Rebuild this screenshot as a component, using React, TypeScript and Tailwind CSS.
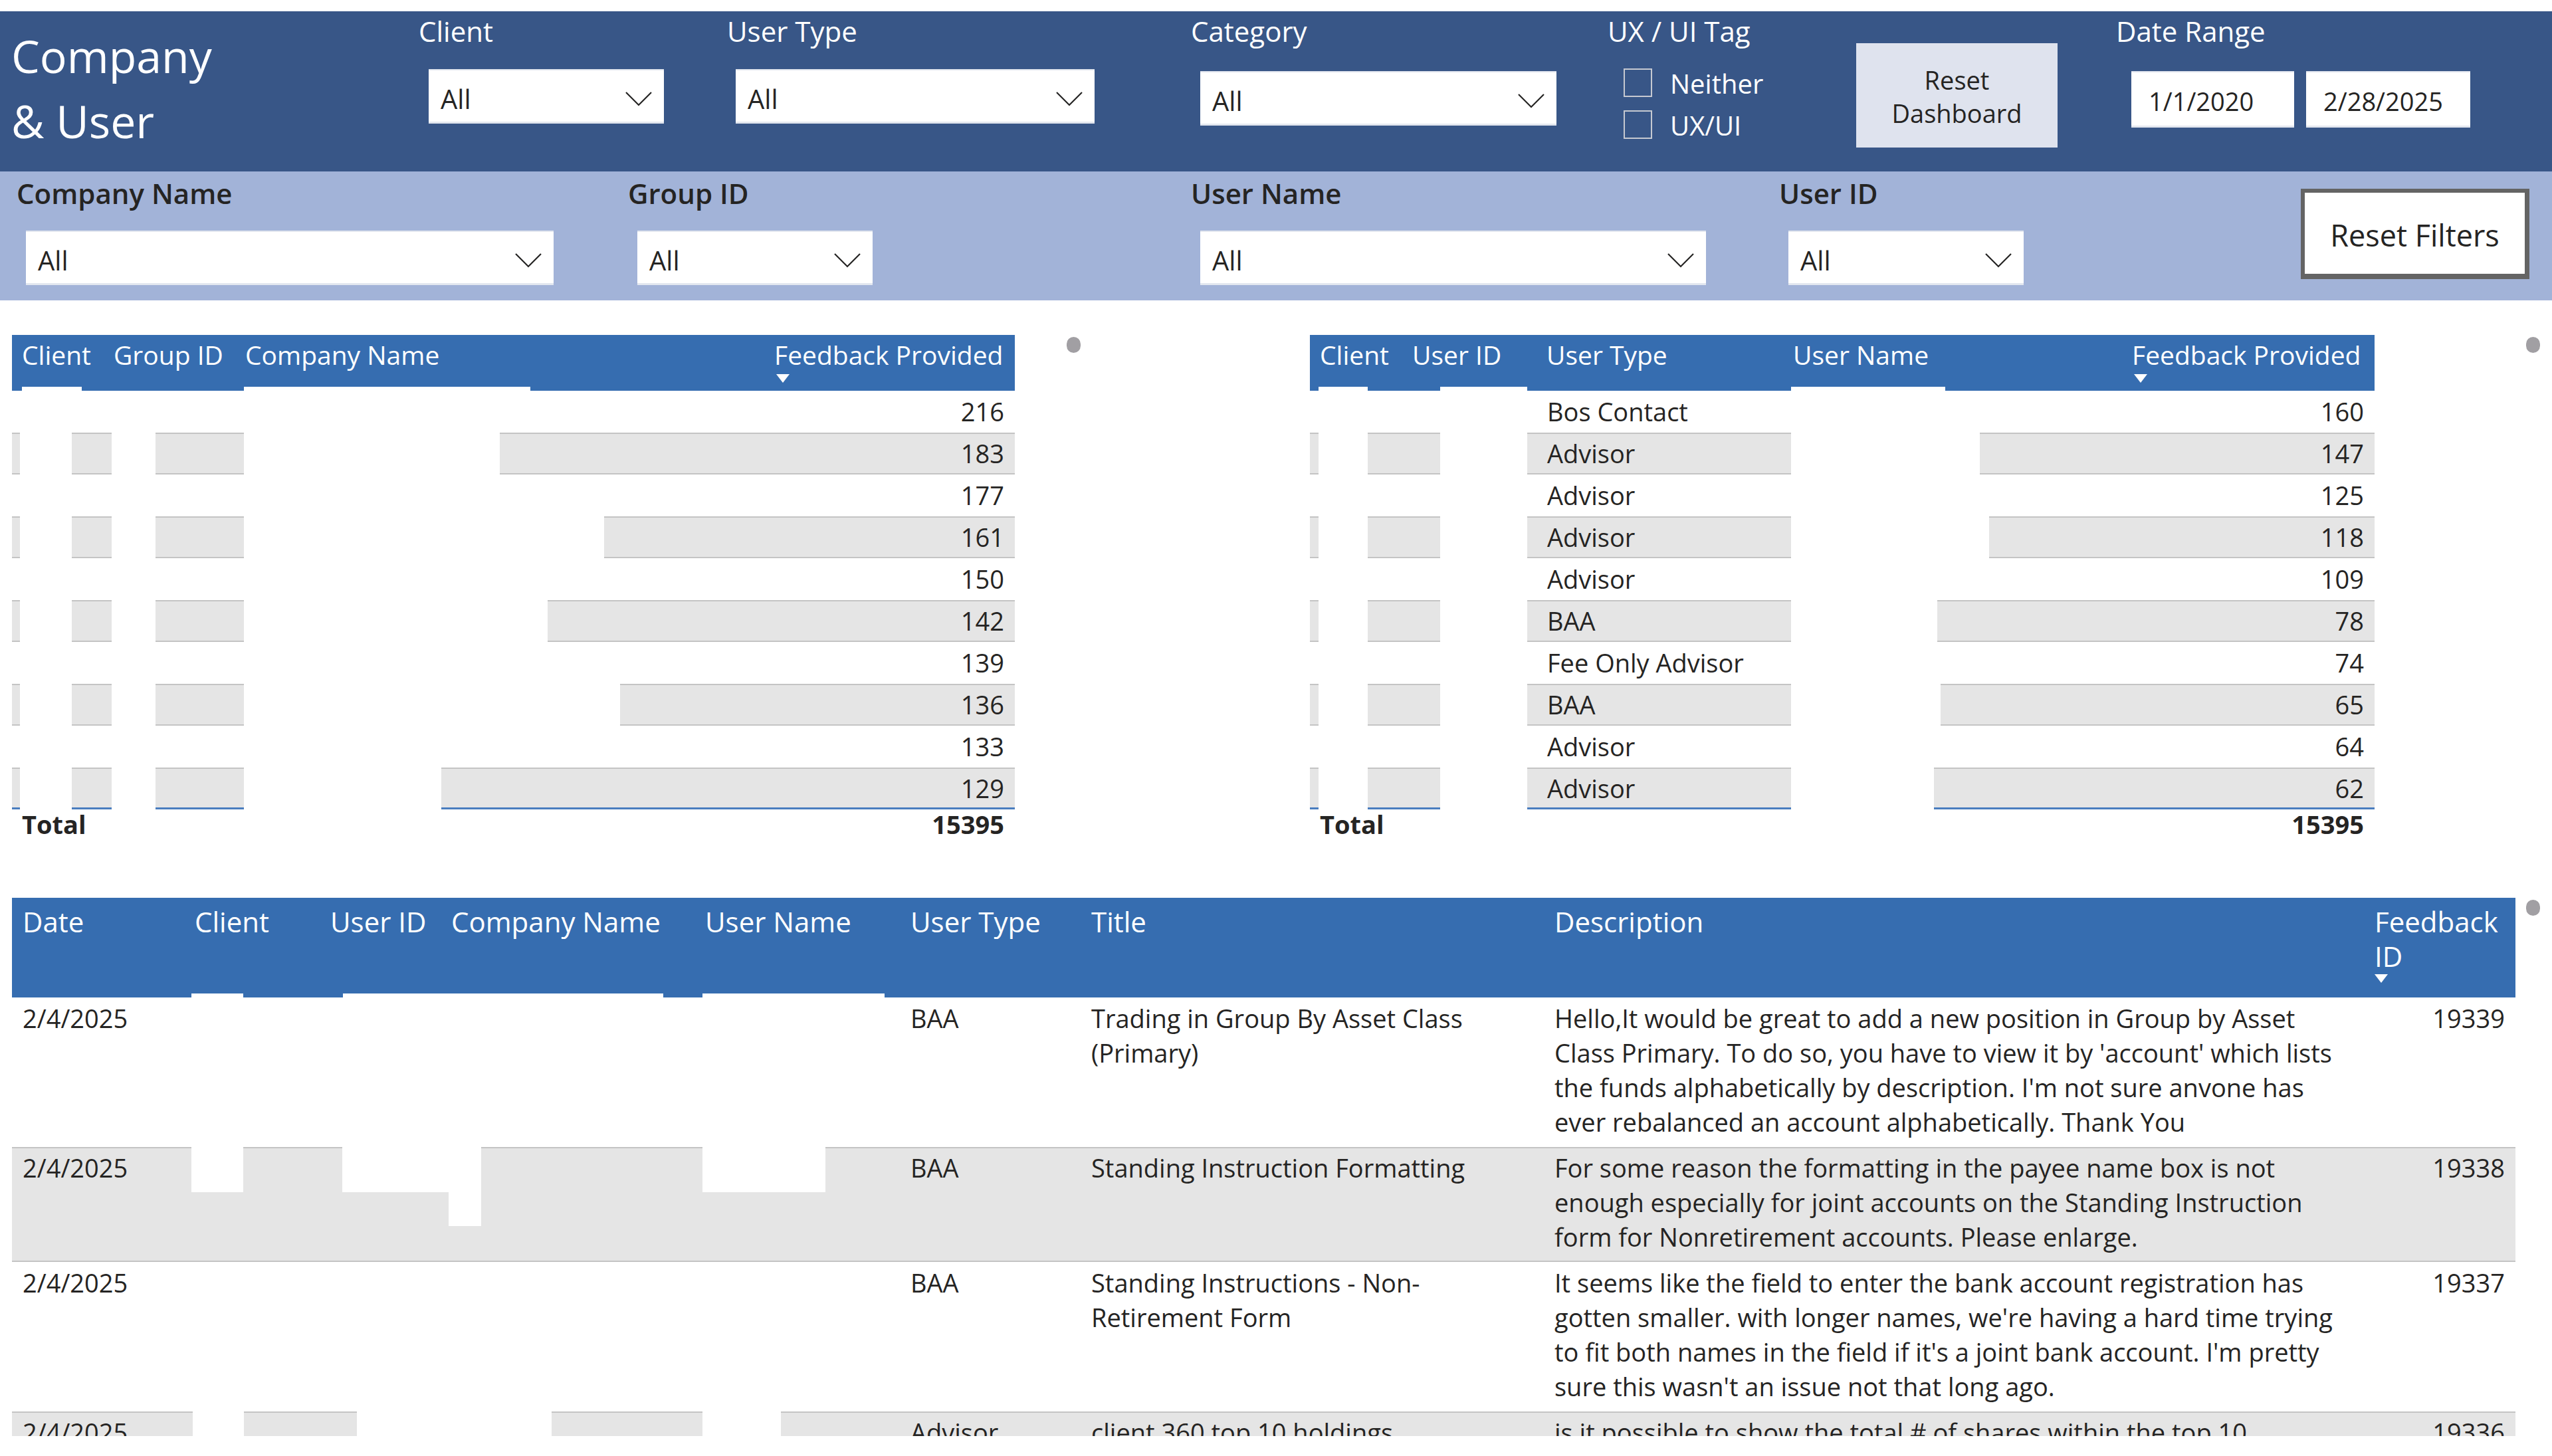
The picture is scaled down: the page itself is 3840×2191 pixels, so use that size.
import React from "react";

function Chevron() {
  return (
    <svg width="40" height="22" viewBox="0 0 40 22" fill="none">
      <path d="M1 1 L20 20 L39 1" stroke="#252423" strokeWidth="2.2" />
    </svg>
  );
}

function SortArrow() {
  return (
    <svg width="20" height="13" viewBox="0 0 20 13">
      <path d="M0 0 H20 L10 13 Z" fill="#ffffff" />
    </svg>
  );
}

function Dropdown({ cls }: { cls: string }) {
  return (
    <div
      className={`${cls} shrink-0 bg-white border-t-2 border-b-[3px] border-[#e3e7ef] flex items-center justify-between pl-[18px] pr-[18px] pt-[9px] text-[40px] text-[#252423]`}
    >
      <span>All</span>
      <Chevron />
    </div>
  );
}

function DateBox({ cls, value }: { cls: string; value: string }) {
  return (
    <div
      className={`${cls} h-[85px] shrink-0 bg-white border-t-2 border-b-[3px] border-[#e3e7ef] flex items-center pl-[26px] pt-[7px] text-[38px] text-[#252423]`}
    >
      {value}
    </div>
  );
}

function Checkbox({ label }: { label: string }) {
  return (
    <div className="flex items-center h-[43px]">
      <div className="w-[43px] h-[43px] border-2 border-[#c6c9d1] shrink-0" />
      <span className="ml-[27px] text-[40px] text-white translate-y-[1px]">{label}</span>
    </div>
  );
}

type Col = { w: string; label: string; right?: boolean; sort?: boolean };

type SmallRow = { cells: string[]; blocks: string[] };

function SmallTable({
  cols,
  rows,
  headerBlocks,
  total,
}: {
  cols: Col[];
  rows: SmallRow[];
  headerBlocks: string[];
  total: string;
}) {
  return (
    <div className="shrink-0 text-[#252423]">
      <div className="relative h-[84px] bg-[#366db0] flex text-white text-[39px] leading-[49px]">
        {cols.map((c, i) => (
          <div key={i} className={`${c.w} shrink-0 pl-[15px] pt-[5px] whitespace-nowrap`}>
            <div>{c.label}</div>
            {c.sort && (
              <div className="ml-[3px] mt-[5px] leading-none">
                <SortArrow />
              </div>
            )}
          </div>
        ))}
        {headerBlocks.map((b, i) => (
          <div key={i} className={`absolute bottom-0 h-[6px] bg-white ${b}`} />
        ))}
      </div>
      {rows.map((r, ri) => {
        const gray = ri % 2 === 1;
        const last = ri === rows.length - 1;
        const bg = gray
          ? last
            ? "bg-[#e5e5e5] shadow-[inset_0_2px_0_#c4c4c4,inset_0_-3px_0_#4a7dbf]"
            : "bg-[#e5e5e5] shadow-[inset_0_2px_0_#c4c4c4,inset_0_-2px_0_#c4c4c4]"
          : "bg-white";
        return (
          <div key={ri} className={`relative h-[63px] flex text-[38px] leading-[63px] ${bg}`}>
            {cols.map((c, ci) => (
              <div
                key={ci}
                className={`${c.w} shrink-0 whitespace-nowrap ${c.right ? "text-right pr-[16px]" : "pl-[16px]"}`}
              >
                {r.cells[ci]}
              </div>
            ))}
            {r.blocks.map((b, i) => (
              <div key={i} className={`absolute top-0 bottom-0 bg-white ${b}`} />
            ))}
          </div>
        );
      })}
      <div className="h-[44px] flex text-[38px] font-bold leading-[44px]">
        {cols.map((c, ci) => (
          <div
            key={ci}
            className={`${c.w} shrink-0 whitespace-nowrap ${c.right ? "text-right pr-[16px]" : "pl-[15px]"}`}
          >
            {ci === 0 ? "Total" : c.right ? total : ""}
          </div>
        ))}
      </div>
    </div>
  );
}

const t1Cols: Col[] = [
  { w: "w-[138px]", label: "Client" },
  { w: "w-[198px]", label: "Group ID" },
  { w: "w-[796px]", label: "Company Name" },
  { w: "w-[377px]", label: "Feedback Provided", right: true, sort: true },
];

const t1Common = ["left-[12px] w-[78px]", "left-[150px] w-[66px]"];
const t1Rows: SmallRow[] = [
  { cells: ["", "", "", "216"], blocks: [] },
  { cells: ["", "", "", "183"], blocks: [...t1Common, "left-[349px] w-[385px]"] },
  { cells: ["", "", "", "177"], blocks: [] },
  { cells: ["", "", "", "161"], blocks: [...t1Common, "left-[349px] w-[542px]"] },
  { cells: ["", "", "", "150"], blocks: [] },
  { cells: ["", "", "", "142"], blocks: [...t1Common, "left-[349px] w-[457px]"] },
  { cells: ["", "", "", "139"], blocks: [] },
  { cells: ["", "", "", "136"], blocks: [...t1Common, "left-[349px] w-[566px]"] },
  { cells: ["", "", "", "133"], blocks: [] },
  { cells: ["", "", "", "129"], blocks: [...t1Common, "left-[349px] w-[297px]"] },
];

const t2Cols: Col[] = [
  { w: "w-[139px]", label: "Client" },
  { w: "w-[202px]", label: "User ID" },
  { w: "w-[371px]", label: "User Type" },
  { w: "w-[510px]", label: "User Name" },
  { w: "w-[380px]", label: "Feedback Provided", right: true, sort: true },
];

const t2Common = ["left-[13px] w-[74px]", "left-[196px] w-[131px]"];
const t2Rows: SmallRow[] = [
  { cells: ["", "", "Bos Contact", "", "160"], blocks: [] },
  { cells: ["", "", "Advisor", "", "147"], blocks: [...t2Common, "left-[724px] w-[284px]"] },
  { cells: ["", "", "Advisor", "", "125"], blocks: [] },
  { cells: ["", "", "Advisor", "", "118"], blocks: [...t2Common, "left-[724px] w-[298px]"] },
  { cells: ["", "", "Advisor", "", "109"], blocks: [] },
  { cells: ["", "", "BAA", "", "78"], blocks: [...t2Common, "left-[724px] w-[220px]"] },
  { cells: ["", "", "Fee Only Advisor", "", "74"], blocks: [] },
  { cells: ["", "", "BAA", "", "65"], blocks: [...t2Common, "left-[724px] w-[225px]"] },
  { cells: ["", "", "Advisor", "", "64"], blocks: [] },
  { cells: ["", "", "Advisor", "", "62"], blocks: [...t2Common, "left-[724px] w-[215px]"] },
];

const bigCols: Col[] = [
  { w: "w-[259px]", label: "Date" },
  { w: "w-[204px]", label: "Client" },
  { w: "w-[182px]", label: "User ID" },
  { w: "w-[382px]", label: "Company Name" },
  { w: "w-[309px]", label: "User Name" },
  { w: "w-[272px]", label: "User Type" },
  { w: "w-[697px]", label: "Title" },
  { w: "w-[1234px]", label: "Description" },
  { w: "w-[228px]", label: "Feedback ID", right: true, sort: true },
];

type BigRow = { cells: (string[] | string)[]; blocks: string[] };

const bigRows: BigRow[] = [
  {
    cells: [
      "2/4/2025",
      "",
      "",
      "",
      "",
      "BAA",
      ["Trading in Group By Asset Class", "(Primary)"],
      [
        "Hello,It would be great to add a new position in Group by Asset",
        "Class Primary. To do so, you have to view it by 'account' which lists",
        "the funds alphabetically by description. I'm not sure anvone has",
        "ever rebalanced an account alphabetically. Thank You",
      ],
      "19339",
    ],
    blocks: [],
  },
  {
    cells: [
      "2/4/2025",
      "",
      "",
      "",
      "",
      "BAA",
      ["Standing Instruction Formatting"],
      [
        "For some reason the formatting in the payee name box is not",
        "enough especially for joint accounts on the Standing Instruction",
        "form for Nonretirement accounts. Please enlarge.",
      ],
      "19338",
    ],
    blocks: [
      "left-[270px] w-[78px] h-[68px]",
      "left-[497px] w-[160px] h-[68px]",
      "left-[657px] w-[49px] h-[119px]",
      "left-[1039px] w-[185px] h-[68px]",
    ],
  },
  {
    cells: [
      "2/4/2025",
      "",
      "",
      "",
      "",
      "BAA",
      ["Standing Instructions - Non-", "Retirement Form"],
      [
        "It seems like the field to enter the bank account registration has",
        "gotten smaller. with longer names, we're having a hard time trying",
        "to fit both names in the field if it's a joint bank account. I'm pretty",
        "sure this wasn't an issue not that long ago.",
      ],
      "19337",
    ],
    blocks: [],
  },
  {
    cells: [
      "2/4/2025",
      "",
      "",
      "",
      "",
      "Advisor",
      ["client 360 top 10 holdings"],
      ["is it possible to show the total # of shares within the top 10"],
      "19336",
    ],
    blocks: [
      "left-[272px] w-[77px] h-[200px]",
      "left-[519px] w-[293px] h-[200px]",
      "left-[1039px] w-[118px] h-[200px]",
    ],
  },
];

function BigTable() {
  return (
    <div className="relative w-[3767px] h-[810px] overflow-hidden shrink-0 text-[#252423]">
      <div className="relative h-[150px] bg-[#366db0] flex text-white text-[42px] leading-[52px]">
        {bigCols.map((c, i) => (
          <div key={i} className={`${c.w} shrink-0 pl-[16px] pt-[10px]`}>
            {c.label === "Feedback ID" ? (
              <>
                <div>Feedback</div>
                <div>ID</div>
                <div className="mt-[1px] leading-none">
                  <SortArrow />
                </div>
              </>
            ) : (
              <div className="whitespace-nowrap">{c.label}</div>
            )}
          </div>
        ))}
        <div className="absolute bottom-0 h-[6px] bg-white left-[270px] w-[78px]" />
        <div className="absolute bottom-0 h-[6px] bg-white left-[498px] w-[482px]" />
        <div className="absolute bottom-0 h-[6px] bg-white left-[1039px] w-[274px]" />
      </div>
      {bigRows.map((r, ri) => {
        const gray = ri % 2 === 1;
        const bg = gray
          ? "bg-[#e5e5e5] shadow-[inset_0_2px_0_#c4c4c4,inset_0_-2px_0_#c4c4c4]"
          : "bg-white";
        return (
          <div key={ri} className={`relative flex text-[38px] leading-[52px] pt-[5px] pb-[12px] ${bg}`}>
            {bigCols.map((c, ci) => {
              const v = r.cells[ci];
              const lines = Array.isArray(v) ? v : [v];
              return (
                <div
                  key={ci}
                  className={`${c.w} shrink-0 ${c.right ? "text-right pr-[16px]" : "pl-[16px]"}`}
                >
                  {lines.map((l, li) => (
                    <div key={li} className="whitespace-nowrap">
                      {l}
                    </div>
                  ))}
                </div>
              );
            })}
            {r.blocks.map((b, i) => (
              <div key={i} className={`absolute top-0 bg-white ${b}`} />
            ))}
          </div>
        );
      })}
    </div>
  );
}

function Dot() {
  return <div className="w-[21px] h-[24px] rounded-full bg-[#a19fa3] shrink-0 mt-[3px]" />;
}

export default function App() {
  return (
    <div className="w-[3840px] h-[2191px] overflow-hidden bg-white font-['Open_Sans',sans-serif]">
      {/* Top dark band */}
      <div className="mt-[17px] h-[241px] bg-[#385687] flex text-white">
        <div className="w-[630px] shrink-0 pl-[17px] pt-[18px] text-[68px] leading-[98px]">
          <div>Company</div>
          <div>&amp; User</div>
        </div>
        <div className="w-[464px] shrink-0 pt-[9px]">
          <div className="text-[42px] leading-[42px]">Client</div>
          <Dropdown cls="ml-[15px] mt-[36px] w-[354px] h-[82px]" />
        </div>
        <div className="w-[698px] shrink-0 pt-[9px]">
          <div className="text-[42px] leading-[42px]">User Type</div>
          <Dropdown cls="ml-[13px] mt-[36px] w-[540px] h-[82px]" />
        </div>
        <div className="w-[627px] shrink-0 pt-[9px]">
          <div className="text-[42px] leading-[42px]">Category</div>
          <Dropdown cls="ml-[14px] mt-[39px] w-[536px] h-[82px]" />
        </div>
        <div className="w-[374px] shrink-0 pt-[9px]">
          <div className="text-[42px] leading-[42px]">UX / UI Tag</div>
          <div className="ml-[24px] mt-[35px] flex flex-col gap-[20px]">
            <Checkbox label="Neither" />
            <Checkbox label="UX/UI" />
          </div>
        </div>
        <div className="w-[391px] shrink-0">
          <div className="mt-[48px] w-[303px] h-[157px] bg-[#dfe3ee] flex flex-col items-center justify-center pt-[3px] text-[38px] leading-[50px] text-[#252423]">
            <div>Reset</div>
            <div>Dashboard</div>
          </div>
        </div>
        <div className="flex-1 pt-[9px]">
          <div className="text-[42px] leading-[42px]">Date Range</div>
          <div className="ml-[23px] mt-[39px] flex gap-[18px]">
            <DateBox cls="w-[245px]" value="1/1/2020" />
            <DateBox cls="w-[247px]" value="2/28/2025" />
          </div>
        </div>
      </div>

      {/* Light band */}
      <div className="h-[194px] bg-[#a2b3d8] flex text-[#252423]">
        <div className="w-[945px] shrink-0 pl-[25px] pt-[12px]">
          <div className="text-[42px] leading-[42px] font-semibold">Company Name</div>
          <Dropdown cls="ml-[14px] mt-[35px] w-[794px] h-[82px]" />
        </div>
        <div className="w-[847px] shrink-0 pt-[12px]">
          <div className="text-[42px] leading-[42px] font-semibold">Group ID</div>
          <Dropdown cls="ml-[14px] mt-[35px] w-[354px] h-[82px]" />
        </div>
        <div className="w-[885px] shrink-0 pt-[12px]">
          <div className="text-[42px] leading-[42px] font-semibold">User Name</div>
          <Dropdown cls="ml-[14px] mt-[35px] w-[761px] h-[82px]" />
        </div>
        <div className="w-[785px] shrink-0 pt-[12px]">
          <div className="text-[42px] leading-[42px] font-semibold">User ID</div>
          <Dropdown cls="ml-[14px] mt-[35px] w-[354px] h-[82px]" />
        </div>
        <div className="mt-[26px] w-[344px] h-[136px] shrink-0 bg-white border-[6px] border-b-[8px] border-r-[7px] border-[#646464] flex items-center justify-center pt-[6px] text-[45px]">
          Reset Filters
        </div>
      </div>

      {/* Two summary tables */}
      <div className="mt-[52px] flex items-start">
        <div className="ml-[18px]">
          <SmallTable
            cols={t1Cols}
            rows={t1Rows}
            headerBlocks={["left-[15px] w-[90px]", "left-[349px] w-[431px]"]}
            total="15395"
          />
        </div>
        <div className="ml-[78px]">
          <Dot />
        </div>
        <div className="ml-[345px]">
          <SmallTable
            cols={t2Cols}
            rows={t2Rows}
            headerBlocks={["left-[13px] w-[74px]", "left-[196px] w-[131px]", "left-[724px] w-[232px]"]}
            total="15395"
          />
        </div>
        <div className="ml-[228px]">
          <Dot />
        </div>
      </div>

      {/* Detail table */}
      <div className="mt-[89px] flex items-start">
        <div className="ml-[18px]">
          <BigTable />
        </div>
        <div className="ml-[16px]">
          <Dot />
        </div>
      </div>
    </div>
  );
}
